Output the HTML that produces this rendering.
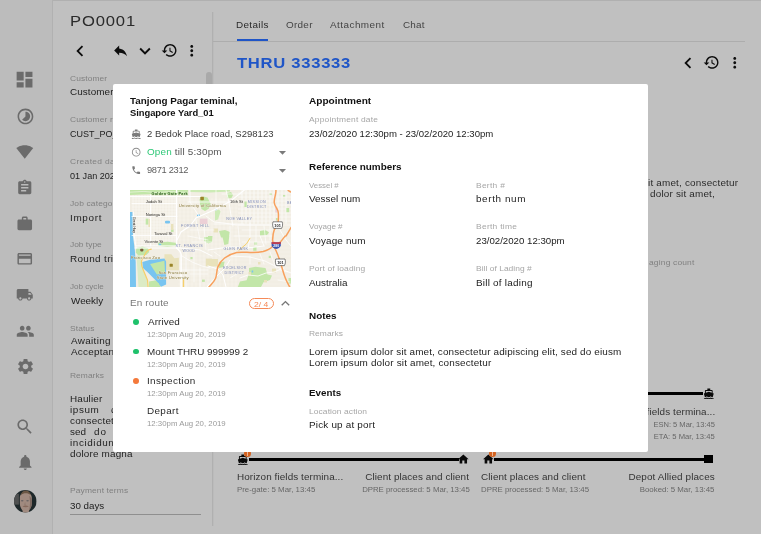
<!DOCTYPE html>
<html lang="en"><head><meta charset="utf-8"><title>PO0001 - Location details</title>
<style>
html,body{margin:0;padding:0}
body{width:761px;height:534px;overflow:hidden;background:#c0c0c0;position:relative;
 font-family:"Liberation Sans",sans-serif;-webkit-font-smoothing:antialiased}
.t{position:absolute;white-space:nowrap;line-height:12px;display:block;will-change:transform}
.ic{position:absolute;display:block;overflow:visible}
.b{position:absolute;display:block}
</style></head><body>
<div class="b" style="left:0px;top:0px;width:52px;height:534px;background:#bcbcbc;"></div>
<div class="b" style="left:52px;top:0px;width:1px;height:534px;background:#b1b1b1;"></div>
<div class="b" style="left:53px;top:0px;width:708px;height:1px;background:#b0b0b0;"></div>
<div class="b" style="left:212px;top:12px;width:1px;height:514px;background:#b0b0b0;"></div>
<div class="b" style="left:213px;top:12px;width:1px;height:514px;background:#bbbbbb;"></div>
<div class="b" style="left:213px;top:41px;width:532px;height:1px;background:#adadad;"></div>
<div class="b" style="left:237px;top:39px;width:31px;height:2px;background:#1f55c7;"></div>
<div class="b" style="left:206px;top:72px;width:6px;height:60px;background:#a9a9a9;border-radius:3px;"></div>
<div class="b" style="left:70px;top:514px;width:131px;height:1px;background:#8f8f8f;"></div>
<svg class="ic" style="left:14.45px;top:69.45px;width:21.10px;height:21.10px" viewBox="0 0 24 24"><path fill="#6b6b6b" d="M3 13h8V3H3v10zm0 8h8v-6H3v6zm10 0h8V11h-8v10zm0-18v6h8V3h-8z"/></svg>
<svg class="ic" style="left:15.55px;top:106.55px;width:18.90px;height:18.90px" viewBox="0 0 24 24"><path fill="#6b6b6b" d="M16.24 7.76C15.07 6.59 13.54 6 12 6v6l-4.24 4.24c2.34 2.34 6.14 2.34 8.49 0 2.34-2.34 2.34-6.14-.01-8.48zM12 2C6.48 2 2 6.48 2 12s4.48 10 10 10 10-4.48 10-10S17.52 2 12 2zm0 18c-4.42 0-8-3.58-8-8s3.58-8 8-8 8 3.58 8 8-3.58 8-8 8z"/></svg>
<svg class="ic" style="left:16.25px;top:143.25px;width:17.50px;height:17.50px" viewBox="0 0 24 24"><path fill="#6b6b6b" d="M12.01 21.49L23.64 7c-.45-.34-4.93-4-11.64-4C5.28 3 .81 6.66.36 7l11.63 14.49.01.01.01-.01z"/></svg>
<svg class="ic" style="left:16.25px;top:178.75px;width:17.50px;height:17.50px" viewBox="0 0 24 24"><path fill="#6b6b6b" d="M19 3h-4.18C14.4 1.84 13.3 1 12 1c-1.3 0-2.4.84-2.82 2H5c-1.1 0-2 .9-2 2v14c0 1.1.9 2 2 2h14c1.1 0 2-.9 2-2V5c0-1.1-.9-2-2-2zm-7 0c.55 0 1 .45 1 1s-.45 1-1 1-1-.45-1-1 .45-1 1-1zm2 14H7v-2h7v2zm3-4H7v-2h10v2zm0-4H7V7h10v2z"/></svg>
<svg class="ic" style="left:16.25px;top:214.75px;width:17.50px;height:17.50px" viewBox="0 0 24 24"><path fill="#6b6b6b" d="M20 6h-4V4c0-1.11-.89-2-2-2h-4c-1.11 0-2 .89-2 2v2H4c-1.11 0-1.99.89-1.99 2L2 19c0 1.11.89 2 2 2h16c1.11 0 2-.89 2-2V8c0-1.11-.89-2-2-2zm-6 0h-4V4h4v2z"/></svg>
<svg class="ic" style="left:16.25px;top:250.25px;width:17.50px;height:17.50px" viewBox="0 0 24 24"><path fill="#6b6b6b" d="M20 4H4c-1.11 0-1.99.89-1.99 2L2 18c0 1.11.89 2 2 2h16c1.11 0 2-.89 2-2V6c0-1.11-.89-2-2-2zm0 14H4v-6h16v6zm0-10H4V6h16v2z"/></svg>
<svg class="ic" style="left:16.25px;top:286.25px;width:17.50px;height:17.50px" viewBox="0 0 24 24"><path fill="#6b6b6b" d="M20 8h-3V4H3c-1.1 0-2 .9-2 2v11h2c0 1.66 1.34 3 3 3s3-1.34 3-3h6c0 1.66 1.34 3 3 3s3-1.34 3-3h2v-5l-3-4zM6 18.5c-.83 0-1.5-.67-1.5-1.5s.67-1.5 1.5-1.5 1.5.67 1.5 1.5-.67 1.5-1.5 1.5zm13.5-9l1.96 2.5H17V9.5h2.5zm-1.5 9c-.83 0-1.5-.67-1.5-1.5s.67-1.5 1.5-1.5 1.5.67 1.5 1.5-.67 1.5-1.5 1.5z"/></svg>
<svg class="ic" style="left:15.70px;top:321.70px;width:18.60px;height:18.60px" viewBox="0 0 24 24"><path fill="#6b6b6b" d="M16 11c1.66 0 2.99-1.34 2.99-3S17.66 5 16 5c-1.66 0-3 1.34-3 3s1.34 3 3 3zm-8 0c1.66 0 2.99-1.34 2.99-3S9.66 5 8 5C6.34 5 5 6.34 5 8s1.34 3 3 3zm0 2c-2.33 0-7 1.17-7 3.5V19h14v-2.500c0-2.33-4.67-3.5-7-3.5zm8 0c-.29 0-.62.02-.97.05 1.16.84 1.97 1.970 1.970 3.45V19h6v-2.500c0-2.33-4.67-3.5-7-3.5z"/></svg>
<svg class="ic" style="left:15.50px;top:356.90px;width:19.00px;height:19.00px" viewBox="0 0 24 24"><path fill="#6b6b6b" d="M19.140 12.940c.04-.3.06-.61.06-.94 0-.32-.02-.64-.07-.94l2.030-1.580c.18-.14.23-.41.12-.61l-1.920-3.320c-.12-.22-.37-.29-.59-.22l-2.390.96c-.5-.38-1.030-.7-1.620-.94l-.36-2.540c-.04-.24-.24-.41-.48-.41h-3.840c-.24 0-.43.17-.47.41l-.36 2.540c-.59.24-1.130.57-1.620.94l-2.390-.96c-.22-.08-.47 0-.59.22L2.740 8.870c-.12.21-.08.47.12.61l2.030 1.580c-.05.3-.09.63-.09.94s.02.640.07.940l-2.030 1.580c-.18.14-.23.41-.12.61l1.920 3.320c.12.22.37.29.59.22l2.390-.96c.5.38 1.030.7 1.620.94l.36 2.540c.05.24.24.41.48.41h3.840c.24 0 .44-.17.47-.41l.36-2.540c.59-.24 1.130-.56 1.620-.94l2.390.96c.22.08.47 0 .59-.22l1.920-3.320c.12-.22.07-.47-.12-.61l-2.010-1.580zM12 15.600c-1.980 0-3.600-1.620-3.600-3.600s1.620-3.600 3.600-3.600 3.600 1.620 3.600 3.600-1.620 3.600-3.600 3.600z"/></svg>
<svg class="ic" style="left:15.25px;top:416.75px;width:19.50px;height:19.50px" viewBox="0 0 24 24"><path fill="#6b6b6b" d="M15.5 14h-.79l-.28-.27C15.410 12.590 16 11.110 16 9.500 16 5.910 13.090 3 9.500 3S3 5.910 3 9.500 5.910 16 9.500 16c1.610 0 3.090-.59 4.230-1.570l.27.28v.79l5 4.990L20.490 19l-4.990-5zm-6 0C7.010 14 5 11.990 5 9.500S7.010 5 9.500 5 14 7.010 14 9.500 11.990 14 9.500 14z"/></svg>
<svg class="ic" style="left:15.70px;top:453.30px;width:18.60px;height:18.60px" viewBox="0 0 24 24"><path fill="#6b6b6b" d="M12 22c1.100 0 2-.9 2-2h-4c0 1.100.89 2 2 2zm6-6v-5c0-3.070-1.640-5.640-4.500-6.320V4c0-.83-.67-1.500-1.500-1.500s-1.500.67-1.500 1.500v.68C7.630 5.360 6 7.920 6 11v5l-2 2v1h16v-1l-2-2z"/></svg>
<svg class="ic" style="left:13.7px;top:489.7px;width:22.600px;height:22.700px" viewBox="0 0 24 24">
<defs><clipPath id="av"><circle cx="12" cy="12" r="12"/></clipPath></defs>
<g clip-path="url(#av)"><rect width="24" height="24" fill="#1e282a"/>
<rect x="0" y="4" width="5.200" height="11.500" fill="#4f5050"/>
<path d="M6.200 8c0-3.500 2.600-5.500 6.300-5.500s6.400 2 6.400 5.500v6c0 3-1.200 5.500-2.800 7.500l-.6 2.500H9.500l-.6-2.500C7.300 19.500 6.200 17 6.200 14z" fill="#a08a7f"/>
<path d="M7.300 5.500C7.800 2.200 10 .6 12.500 .6s4.800 1.600 5.200 4.900C16.200 3.800 14.500 3.400 12.500 3.400S8.800 3.800 7.300 5.500z" fill="#6b5745"/>
<path d="M16.300 6c1.700 1.500 2.600 3.500 2.600 6v2c0 3-1.200 5.500-2.800 7.500.6-3 1-6 .9-9-.1-2.300-.3-4.500-.7-6.500z" fill="#7d6a61"/>
<ellipse cx="8.700" cy="11.400" rx="1.400" ry=".8" fill="#6a6464"/>
<ellipse cx="14.400" cy="11.400" rx="1.400" ry=".8" fill="#6a6464"/>
<path d="M9 17.400c1.200-.8 2.200-1 3.400-1s2.300.3 3.400 1c-1 .5-2.200.9-3.400.9s-2.400-.4-3.400-.9z" fill="#85695c"/>
<path d="M11.800 12.500l-.9 3.200 1.600.4z" fill="#8e786d"/>
</g></svg>
<svg class="ic" style="left:68.50px;top:39.80px;width:22.00px;height:22.00px" viewBox="0 0 24 24"><path fill="#0d0d0d" d="M15.410 7.410L14 6l-6 6 6 6 1.410-1.410L10.830 12z"/></svg>
<svg class="ic" style="left:112.15px;top:41.70px;width:17.20px;height:17.20px" viewBox="0 0 24 24"><path fill="#0d0d0d" d="M10 9V5l-7 7 7 7v-4.100c5 0 8.500 1.600 11 5.100-1-5-4-10-11-11z"/></svg>
<svg class="ic" style="left:133.60px;top:39.70px;width:22.00px;height:22.00px" viewBox="0 0 24 24"><path fill="#0d0d0d" d="M16.590 8.590L12 13.170 7.410 8.590 6 10l6 6 6-6z"/></svg>
<svg class="ic" style="left:161.15px;top:42.05px;width:16.90px;height:16.90px" viewBox="0 0 24 24"><path fill="#0d0d0d" d="M13 3c-4.970 0-9 4.030-9 9H1l3.890 3.890.07.14L9 12H6c0-3.870 3.130-7 7-7s7 3.130 7 7-3.130 7-7 7c-1.930 0-3.680-.79-4.940-2.060l-1.420 1.420C8.270 19.990 10.510 21 13 21c4.970 0 9-4.030 9-9s-4.030-9-9-9zm-1 5v5l4.280 2.540.72-1.210-3.500-2.080V8H12z"/></svg>
<svg class="ic" style="left:183.35px;top:42.05px;width:17.50px;height:17.50px" viewBox="0 0 24 24"><path fill="#0d0d0d" d="M12 8c1.100 0 2-.9 2-2s-.9-2-2-2-2 .9-2 2 .9 2 2 2zm0 2c-1.100 0-2 .9-2 2s.9 2 2 2 2-.9 2-2-.9-2-2-2zm0 6c-1.100 0-2 .9-2 2s.9 2 2 2 2-.9 2-2-.9-2-2-2z"/></svg>
<svg class="ic" style="left:676.80px;top:51.80px;width:22.00px;height:22.00px" viewBox="0 0 24 24"><path fill="#0d0d0d" d="M15.410 7.410L14 6l-6 6 6 6 1.410-1.410L10.830 12z"/></svg>
<svg class="ic" style="left:703.45px;top:53.95px;width:16.90px;height:16.90px" viewBox="0 0 24 24"><path fill="#0d0d0d" d="M13 3c-4.970 0-9 4.030-9 9H1l3.890 3.890.07.14L9 12H6c0-3.870 3.130-7 7-7s7 3.130 7 7-3.130 7-7 7c-1.930 0-3.680-.79-4.940-2.060l-1.420 1.420C8.270 19.990 10.510 21 13 21c4.970 0 9-4.030 9-9s-4.030-9-9-9zm-1 5v5l4.280 2.540.72-1.210-3.500-2.080V8H12z"/></svg>
<svg class="ic" style="left:726.25px;top:54.05px;width:17.50px;height:17.50px" viewBox="0 0 24 24"><path fill="#0d0d0d" d="M12 8c1.100 0 2-.9 2-2s-.9-2-2-2-2 .9-2 2 .9 2 2 2zm0 2c-1.100 0-2 .9-2 2s.9 2 2 2 2-.9 2-2-.9-2-2-2zm0 6c-1.100 0-2 .9-2 2s.9 2 2 2 2-.9 2-2-.9-2-2-2z"/></svg>
<div class="b" style="left:648px;top:392.3px;width:55px;height:3px;background:#000;"></div>
<svg class="ic" style="left:703.00px;top:387.90px;width:11.60px;height:11.60px" viewBox="0 0 24 24"><path fill="#0a0a0a" d="M20 21c-1.390 0-2.780-.47-4-1.320-2.440 1.710-5.560 1.710-8 0C6.780 20.530 5.390 21 4 21H2v2h2c1.380 0 2.740-.35 4-.99 2.520 1.290 5.480 1.290 8 0 1.260.65 2.620.99 4 .99h2v-2h-2zM3.950 19H4c1.600 0 3.020-.88 4-2 .98 1.120 2.400 2 4 2s3.020-.88 4-2c.98 1.120 2.400 2 4 2h.05l1.890-6.680c.08-.26.06-.54-.06-.78s-.34-.42-.6-.5L20 10.620V6c0-1.100-.9-2-2-2h-3V1H9v3H6c-1.100 0-2 .9-2 2v4.620l-1.290.42c-.26.08-.48.26-.6.5s-.15.52-.06.78L3.950 19zM6 6h12v3.970L12 8 6 9.970V6z"/></svg>
<div class="b" style="left:249px;top:457.7px;width:209.5px;height:3px;background:#000;"></div>
<div class="b" style="left:494px;top:457.7px;width:211px;height:3px;background:#000;"></div>
<svg class="ic" style="left:237.20px;top:453.90px;width:11.60px;height:11.60px" viewBox="0 0 24 24"><path fill="#0a0a0a" d="M20 21c-1.390 0-2.780-.47-4-1.320-2.440 1.710-5.560 1.710-8 0C6.780 20.530 5.390 21 4 21H2v2h2c1.380 0 2.740-.35 4-.99 2.520 1.290 5.480 1.290 8 0 1.260.65 2.620.99 4 .99h2v-2h-2zM3.950 19H4c1.600 0 3.020-.88 4-2 .98 1.120 2.400 2 4 2s3.020-.88 4-2c.98 1.120 2.400 2 4 2h.05l1.890-6.680c.08-.26.06-.54-.06-.78s-.34-.42-.6-.5L20 10.620V6c0-1.100-.9-2-2-2h-3V1H9v3H6c-1.100 0-2 .9-2 2v4.620l-1.290.42c-.26.08-.48.26-.6.5s-.15.52-.06.78L3.950 19zM6 6h12v3.970L12 8 6 9.970V6z"/></svg>
<div class="b" style="left:243.900px;top:450.300px;width:7.100px;height:7.100px;border-radius:50%;background:#d4621f"></div>
<div class="b" style="left:247.1px;top:452.3px;width:0.8px;height:2.4px;background:#e9b79a;"></div>
<div class="b" style="left:247.1px;top:455.2px;width:0.8px;height:0.8px;background:#e9b79a;"></div>
<svg class="ic" style="left:457.45px;top:453.05px;width:12.70px;height:12.70px" viewBox="0 0 24 24"><path fill="#0a0a0a" d="M10 20v-6h4v6h5v-8h3L12 3 2 12h3v8z"/></svg>
<svg class="ic" style="left:481.75px;top:453.05px;width:12.70px;height:12.70px" viewBox="0 0 24 24"><path fill="#0a0a0a" d="M10 20v-6h4v6h5v-8h3L12 3 2 12h3v8z"/></svg>
<div class="b" style="left:488.600px;top:450.300px;width:7.100px;height:7.100px;border-radius:50%;background:#d4621f"></div>
<div class="b" style="left:491.8px;top:452.3px;width:0.8px;height:2.4px;background:#e9b79a;"></div>
<div class="b" style="left:491.8px;top:455.2px;width:0.8px;height:0.8px;background:#e9b79a;"></div>
<div class="b" style="left:704.2px;top:455.2px;width:8.5px;height:8.3px;background:#000;"></div>
<div class="b" style="z-index:1;left:113px;top:84px;width:535px;height:368px;background:#fff;border-radius:2px"></div>
<svg class="ic" style="z-index:2;left:130.70px;top:128.50px;width:10.40px;height:10.40px" viewBox="0 0 24 24"><path fill="#7a7a7a" d="M20 21c-1.390 0-2.780-.47-4-1.320-2.440 1.710-5.560 1.710-8 0C6.780 20.530 5.390 21 4 21H2v2h2c1.380 0 2.740-.35 4-.99 2.520 1.290 5.480 1.290 8 0 1.260.65 2.620.99 4 .99h2v-2h-2zM3.950 19H4c1.600 0 3.020-.88 4-2 .98 1.120 2.400 2 4 2s3.020-.88 4-2c.98 1.120 2.400 2 4 2h.05l1.890-6.680c.08-.26.06-.54-.06-.78s-.34-.42-.6-.5L20 10.620V6c0-1.100-.9-2-2-2h-3V1H9v3H6c-1.100 0-2 .9-2 2v4.620l-1.290.42c-.26.08-.48.26-.6.5s-.15.52-.06.78L3.950 19zM6 6h12v3.970L12 8 6 9.970V6z"/></svg>
<svg class="ic" style="z-index:2;left:130.90px;top:146.60px;width:10.40px;height:10.40px" viewBox="0 0 24 24"><path fill="#8c8c8c" d="M11.990 2C6.470 2 2 6.480 2 12s4.470 10 9.990 10C17.520 22 22 17.520 22 12S17.520 2 11.990 2zM12 20c-4.420 0-8-3.580-8-8s3.580-8 8-8 8 3.580 8 8-3.580 8-8 8zm.5-13H11v6l5.250 3.150.75-1.230-4.500-2.670z"/></svg>
<svg class="ic" style="z-index:2;left:130.90px;top:164.70px;width:10.40px;height:10.40px" viewBox="0 0 24 24"><path fill="#7a7a7a" d="M6.620 10.790c1.440 2.830 3.760 5.140 6.590 6.590l2.200-2.200c.27-.27.67-.36 1.020-.24 1.120.37 2.330.57 3.570.57.55 0 1 .45 1 1V20c0 .55-.45 1-1 1-9.390 0-17-7.610-17-17 0-.55.45-1 1-1h3.500c.55 0 1 .45 1 1 0 1.250.2 2.450.57 3.570.11.35.03.74-.25 1.020l-2.200 2.200z"/></svg>
<svg class="ic" style="z-index:2;left:273.60px;top:144.30px;width:17.00px;height:17.00px" viewBox="0 0 24 24"><path fill="#7a7a7a" d="M7 10l5 5 5-5z"/></svg>
<svg class="ic" style="z-index:2;left:273.60px;top:162.30px;width:17.00px;height:17.00px" viewBox="0 0 24 24"><path fill="#7a7a7a" d="M7 10l5 5 5-5z"/></svg>
<svg class="ic" style="z-index:2;left:276.55px;top:295.25px;width:16.90px;height:16.90px" viewBox="0 0 24 24"><path fill="#777" d="M12 8l-6 6 1.410 1.410L12 10.830l4.590 4.580L18 14z"/></svg>
<div class="b" style="z-index:2;left:249.400px;top:298.300px;width:22.400px;height:8.800px;border:1px solid #f58a58;border-radius:6px"></div>
<div class="b" style="z-index:2;left:132.90px;top:318.80px;width:5.800px;height:5.800px;border-radius:50%;background:#1fc16b"></div>
<div class="b" style="z-index:2;left:132.90px;top:348.70px;width:5.800px;height:5.800px;border-radius:50%;background:#1fc16b"></div>
<div class="b" style="z-index:2;left:132.90px;top:378.40px;width:5.800px;height:5.800px;border-radius:50%;background:#f4793b"></div>
<svg class="ic" style="z-index:2;left:130px;top:190px;width:161px;height:97px;overflow:hidden;will-change:transform" viewBox="0 0 161 97">
<rect width="161" height="97" fill="#f2eee4"/>
<path d="M3 5V56" stroke="#fbf9f4" stroke-width=".6"/><path d="M6 5V56" stroke="#fbf9f4" stroke-width=".6"/><path d="M9 5V56" stroke="#fbf9f4" stroke-width=".6"/><path d="M12 5V56" stroke="#fbf9f4" stroke-width=".6"/><path d="M15 5V56" stroke="#fbf9f4" stroke-width=".6"/><path d="M18 5V56" stroke="#fbf9f4" stroke-width=".6"/><path d="M21 5V56" stroke="#fbf9f4" stroke-width=".6"/><path d="M24 5V56" stroke="#fbf9f4" stroke-width=".6"/><path d="M27 5V56" stroke="#fbf9f4" stroke-width=".6"/><path d="M30 5V56" stroke="#fbf9f4" stroke-width=".6"/><path d="M33 5V56" stroke="#fbf9f4" stroke-width=".6"/><path d="M36 5V56" stroke="#fbf9f4" stroke-width=".6"/><path d="M39 5V56" stroke="#fbf9f4" stroke-width=".6"/><path d="M42 5V56" stroke="#fbf9f4" stroke-width=".6"/><path d="M45 5V56" stroke="#fbf9f4" stroke-width=".6"/><path d="M2 8H47" stroke="#fbf9f4" stroke-width=".5"/><path d="M2 11H47" stroke="#fbf9f4" stroke-width=".5"/><path d="M2 14H47" stroke="#fbf9f4" stroke-width=".5"/><path d="M2 17H47" stroke="#fbf9f4" stroke-width=".5"/><path d="M2 20H47" stroke="#fbf9f4" stroke-width=".5"/><path d="M2 23H47" stroke="#fbf9f4" stroke-width=".5"/><path d="M2 26H47" stroke="#fbf9f4" stroke-width=".5"/><path d="M2 29H47" stroke="#fbf9f4" stroke-width=".5"/><path d="M2 32H47" stroke="#fbf9f4" stroke-width=".5"/><path d="M2 35H47" stroke="#fbf9f4" stroke-width=".5"/><path d="M2 38H47" stroke="#fbf9f4" stroke-width=".5"/><path d="M2 41H47" stroke="#fbf9f4" stroke-width=".5"/><path d="M2 44H47" stroke="#fbf9f4" stroke-width=".5"/><path d="M2 47H47" stroke="#fbf9f4" stroke-width=".5"/><path d="M2 50H47" stroke="#fbf9f4" stroke-width=".5"/><path d="M2 53H47" stroke="#fbf9f4" stroke-width=".5"/><path d="M112 0V34" stroke="#fdfcfa" stroke-width=".8"/><path d="M116 0V34" stroke="#fdfcfa" stroke-width=".8"/><path d="M120 0V34" stroke="#fdfcfa" stroke-width=".8"/><path d="M124 0V34" stroke="#fdfcfa" stroke-width=".8"/><path d="M128 0V34" stroke="#fdfcfa" stroke-width=".8"/><path d="M132 0V34" stroke="#fdfcfa" stroke-width=".8"/><path d="M136 0V34" stroke="#fdfcfa" stroke-width=".8"/><path d="M140 0V34" stroke="#fdfcfa" stroke-width=".8"/><path d="M144 0V34" stroke="#fdfcfa" stroke-width=".8"/><path d="M148 0V34" stroke="#fdfcfa" stroke-width=".8"/><path d="M152 0V34" stroke="#fdfcfa" stroke-width=".8"/><path d="M156 0V34" stroke="#fdfcfa" stroke-width=".8"/><path d="M108 3H161" stroke="#fdfcfa" stroke-width=".6"/><path d="M108 7H161" stroke="#fdfcfa" stroke-width=".6"/><path d="M108 11H161" stroke="#fdfcfa" stroke-width=".6"/><path d="M108 15H161" stroke="#fdfcfa" stroke-width=".6"/><path d="M108 19H161" stroke="#fdfcfa" stroke-width=".6"/><path d="M108 23H161" stroke="#fdfcfa" stroke-width=".6"/><path d="M108 27H161" stroke="#fdfcfa" stroke-width=".6"/><path d="M108 31H161" stroke="#fdfcfa" stroke-width=".6"/><path d="M108 35H161" stroke="#fdfcfa" stroke-width=".6"/><path d="M50 8V97" stroke="#f8f5ee" stroke-width=".5"/><path d="M54 8V97" stroke="#f8f5ee" stroke-width=".5"/><path d="M58 8V97" stroke="#f8f5ee" stroke-width=".5"/><path d="M62 8V97" stroke="#f8f5ee" stroke-width=".5"/><path d="M66 8V97" stroke="#f8f5ee" stroke-width=".5"/><path d="M70 8V97" stroke="#f8f5ee" stroke-width=".5"/><path d="M74 8V97" stroke="#f8f5ee" stroke-width=".5"/><path d="M78 8V97" stroke="#f8f5ee" stroke-width=".5"/><path d="M82 8V97" stroke="#f8f5ee" stroke-width=".5"/><path d="M86 8V97" stroke="#f8f5ee" stroke-width=".5"/><path d="M90 8V97" stroke="#f8f5ee" stroke-width=".5"/><path d="M94 8V97" stroke="#f8f5ee" stroke-width=".5"/><path d="M98 8V97" stroke="#f8f5ee" stroke-width=".5"/><path d="M102 8V97" stroke="#f8f5ee" stroke-width=".5"/><path d="M106 8V97" stroke="#f8f5ee" stroke-width=".5"/><path d="M48 10H161" stroke="#f8f5ee" stroke-width=".4"/><path d="M48 14H161" stroke="#f8f5ee" stroke-width=".4"/><path d="M48 18H161" stroke="#f8f5ee" stroke-width=".4"/><path d="M48 22H161" stroke="#f8f5ee" stroke-width=".4"/><path d="M48 26H161" stroke="#f8f5ee" stroke-width=".4"/><path d="M48 30H161" stroke="#f8f5ee" stroke-width=".4"/><path d="M48 34H161" stroke="#f8f5ee" stroke-width=".4"/><path d="M48 38H161" stroke="#f8f5ee" stroke-width=".4"/><path d="M48 42H161" stroke="#f8f5ee" stroke-width=".4"/><path d="M48 46H161" stroke="#f8f5ee" stroke-width=".4"/><path d="M48 50H161" stroke="#f8f5ee" stroke-width=".4"/><path d="M48 54H161" stroke="#f8f5ee" stroke-width=".4"/><path d="M48 58H161" stroke="#f8f5ee" stroke-width=".4"/><path d="M48 62H161" stroke="#f8f5ee" stroke-width=".4"/><path d="M48 66H161" stroke="#f8f5ee" stroke-width=".4"/><path d="M48 70H161" stroke="#f8f5ee" stroke-width=".4"/><path d="M48 74H161" stroke="#f8f5ee" stroke-width=".4"/><path d="M48 78H161" stroke="#f8f5ee" stroke-width=".4"/><path d="M48 82H161" stroke="#f8f5ee" stroke-width=".4"/><path d="M48 86H161" stroke="#f8f5ee" stroke-width=".4"/><path d="M48 90H161" stroke="#f8f5ee" stroke-width=".4"/><path d="M48 94H161" stroke="#f8f5ee" stroke-width=".4"/>
<g fill="#c2e6a8">
<path d="M0 0H58V3.500L47 4.200 30 4 12 4.600 0 5z"/>
<path d="M60 0h40v1.500l-20 1-20-.5z" fill="#cdebb6"/>
<path d="M0 2.200l14-.8 12 1.200 14-1 18 .8" stroke="#eef6e2" stroke-width=".7" fill="none"/>
<rect x="15.700" y="28.600" width="2.800" height="6"/>
<rect x="41" y="39.500" width="2.600" height="2.400"/>
<path d="M69.500 9l4-2.500 4 1 2.500 5-1 6-4 2.500-3.500-2-1.500-5z"/>
<path d="M97 3l4-1 2 3-1.500 3-4 .5z"/>
<rect x="78" y="13" width="2.500" height="4"/>
<rect x="114.400" y="11.500" width="2.300" height="5.500"/>
<path d="M85 21l4-1.500 1.500 2-2.500 8-3 1z" fill="#cdebb6"/>
<path d="M89 41l6-1 5 2-1 5-8 .5z"/>
<path d="M130 41l5-1.500 4 3-2 2.500-7 .5z"/>
<rect x="156.400" y="18" width="2.800" height="4.200"/>
<rect x="139.500" y="3.500" width="2.500" height="1.200"/>
<rect x="153" y="5" width="2.200" height="1.600"/>
<rect x="146" y="28" width="1.600" height="2.500"/>
<path d="M27.800 52.500l10-.8 8 1 .5 3-9 1-9-1z"/>
<path d="M6.300 58l6-1.500 5.500 1.500 1.500 4-3 3-8 .5-2.500-3z"/>
<path d="M74 47h8v5l-5 1-3-2z"/>
<path d="M78 46h4.500l-.5 6-4 1.500z"/>
<path d="M92.300 46h7l-1 8-4 1z"/>
<path d="M89 72.500l5.600-1-1 5.500-4.500 1z"/>
<rect x="72" y="89.600" width="2.800" height="2.300"/>
<rect x="60.400" y="67" width="2.200" height="2.200"/>
<rect x="124.300" y="52" width="2.800" height="2.800"/>
<rect x="123.200" y="57" width="3.300" height="3.800"/>
<rect x="138.700" y="65.800" width="2.200" height="2.200"/>
<rect x="158.500" y="88" width="2.500" height="5.500"/>
<path d="M119 78l6.500-1.200 10 1.200 2 6.500 4.500 1-2 4.500-6.500 2.200-2.500 4.800H107.800l2.200-5.500 6.600-1.200 2.400-6.600z"/>
<path d="M19 97l1-5 6-1.500 4 3 .5 3.500z"/>
</g>
<path d="M6.500 66l3-1 2 6 1.500 8 4 11 1 7H8.500l-1-16z" fill="#dcebc5"/>
<g fill="#e9e2bb">
<rect x="18.400" y="29" width="2" height="8"/>
<rect x="41" y="34" width="2.400" height="5.800"/>
<path d="M34.400 64.200h7l3 4 4.500-.5v12.500H36.500l-2-5z"/>
<rect x="75.800" y="68.600" width="6.400" height="7.800"/>
<rect x="78" y="69" width="10" height="7.400"/>
<rect x="83.500" y="38.500" width="4.500" height="4"/>
<rect x="142" y="78.600" width="4" height="3.800"/>
<rect x="128" y="72" width="2.500" height="2.500"/>
<rect x="118.500" y="82" width="2.500" height="3.500"/>
<rect x="134" y="90" width="3" height="2.500"/>
</g>
<rect x="69.700" y="28.600" width="7.800" height="5.400" fill="#ecd0d6"/>
<rect x="145.300" y="17.500" width="2.300" height="5" fill="#ecd0d6"/>
<g fill="#78c4f0">
<path d="M0 22h2.400l.6 24 1.800 14 .9 12 .3 25H0z"/>
<rect x="35" y="30.800" width="5" height="2.700" rx="1"/>
<path d="M12.300 72l7.800-2.300 14.300-1.100 1.700 2.800v23.200l-5 2.200-5.500-6.600-7.700-7.800-5-4.400z"/>
<rect x="28.800" y="53.700" width="2.400" height="1.600"/>
<rect x="67" y="24.500" width="3" height="1.600"/>
<rect x="85" y="18.800" width="1.600" height="1.400"/>
<rect x="121.700" y="80.500" width="1.500" height="2"/>
</g>
<path d="M20.100 74.100l14.300-3.300 .6 11.600-3.900 1.700-4.200.5-3.700-5.500z" fill="#c2e6a8"/>
<path d="M19 91.500l6-1 4 3 .5 3.500H19z" fill="#c2e6a8"/>
<g fill="none" stroke="#ffffff" stroke-linecap="round">
<path d="M0 6.500H70" stroke-width="1.100"/>
<path d="M20.600 5V56" stroke-width="1"/>
<path d="M46.600 0V58" stroke-width="1.300"/>
<path d="M2 13.500H47M2 26.500H47M2 45.500H47M6 55.800H50" stroke-width=".8"/>
<path d="M46.600 58c2 2 4 3 4.500 6V97" stroke-width="1.500"/>
<path d="M3.500 22l.8 24 1.800 12" stroke-width=".9"/>
<path d="M5 58h45l20 2 12 6" stroke-width="1"/>
<path d="M114.400 0L100 11.500 84 20 66 28l-6 8-9 6-4 8" stroke-width="1.100"/>
<path d="M60 0V12l5 8 4 6M58 12h50M76 26l8 6 10 1 12 2h40" stroke-width=".8"/>
<path d="M96 0l3 12 2 14 2 10M120 33v14l-2 12" stroke-width=".8"/>
<path d="M78 60l14-2 10-1 20 .5 12-1.500" stroke-width=".9"/>
<path d="M78 76l10 3 5 6 3 12M100 70l-5 8-10 10-8 9" stroke-width="1"/>
<path d="M100 66l20 1 15 4 12 6 14 6" stroke-width=".8"/>
<path d="M110 88l8-3 10 1 8-3 8-1 10-4" stroke-width=".8"/>
<path d="M52 66l10 6 10 4 8 2M52 80h26M56 60v37" stroke-width=".7"/>
<path d="M150 40l6 10 5 6M130 46l4 10" stroke-width=".8"/>
<path d="M86 0v20M92 4h20M84 34h30M100 36v22M108 36l2 20M126 36v20M134 36l2 18M140 36v14M112 40h34M104 46h40M112 52h28" stroke-width=".6"/>
<path d="M60 40h24M58 46l20 4M62 52h20M66 30l4 20M74 36l2 24M84 62l6 4M60 84h18M64 62v30M70 78v19M100 88l10-6M120 66v8M130 64l4 10M140 62l6 16M150 80l8 2M148 90l12 2" stroke-width=".6"/>
</g>
<g fill="none" stroke="#f6cf6a" stroke-linecap="round">
<path d="M21.200 59.200c-2 .2-3.500 1-5 3l-4 7c-1.500 3-1 6 .8 10l4.500 11 .6 6.800" stroke-width="1.200"/>
<path d="M120 48.200l-3.400 5.500-7.700 6.600" stroke-width="1"/>
<path d="M53.500 89v8" stroke-width="1.300"/>
</g>
<g fill="none" stroke="#f8a05c" stroke-width="1.500" stroke-linecap="round" stroke-linejoin="round">
<path d="M145.900 0c.5 4-2 8-1.700 12.500.3 3.500 3.400 6 3.900 9 .6 3.500.4 7 0 11-.4 3-2.800 5-3.900 7.600-1.300 3.400-1.500 7-1.600 10 .1 2.500 1.300 4 1.600 5.500"/>
<path d="M79 97c2.500-3 5.500-5.500 6.700-9 1.300-3.800.8-7.600 2.200-11.100 1.300-3.400 3.700-6.600 6.700-8.900 3.400-2.600 7.800-4.400 12.100-5.400 5-1.100 10.400 0 15.500 0 3.700 0 7.500-.2 11-1.100 3.200-.9 6.600-2 8.800-4.500 1.300-1.400 2.200-3 2.200-4.400"/>
<path d="M144.200 57c2.800 5.200 4.800 10.800 6.600 16.600 1.500 4.800 2.600 9.800 4.500 14.400 1.200 3.100 2.800 6 4.400 9"/>
<path d="M155.300 46c-1.600 1.800-3 3.700-4.500 5.500-1.900 2.100-4.300 3.800-6.600 5.500"/>
<path d="M161 37.500c-1.500 2.800-3.200 5.500-4.800 8.300"/>
<path d="M158 0c.8 1 1.800 1.700 3 2"/>
</g>
<g font-family="Liberation Sans, sans-serif" font-size="4.100" fill="#3c4a2c" stroke="#f2eee4" stroke-width=".4" paint-order="stroke">
<text x="21.500" y="4.900" fill="#2f5a22" font-weight="700" font-size="3.800" textLength="36" stroke="#c2e6a8">Golden Gate Park</text>
<text x="15.700" y="13.200" fill="#2e2e2e">Judah St</text>
<text x="15.700" y="26.400" fill="#2e2e2e">Noriega St</text>
<text x="24.200" y="45.300" fill="#2e2e2e">Taraval St</text>
<text x="14.600" y="52.500" fill="#2e2e2e">Vicente St</text>
<text x="100" y="13.300" fill="#2e2e2e">16th St</text>
<text transform="translate(3.300 27) rotate(90)" fill="#2e2e2e" font-size="3.400">Great Hwy</text>
<text x="48.800" y="17.300" fill="#8a7a3c" font-size="4.200" textLength="47">University of California</text>
<text x="-3" y="68.700" fill="#8a7a3c" font-size="4.200" textLength="33">n Francisco Zoo</text>
<text x="28.400" y="83.500" fill="#8a7a3c" font-size="4.200" textLength="28.600">San Francisco</text>
<text x="26.700" y="89" fill="#8a7a3c" font-size="4.200" textLength="32">State University</text>
</g>
<g font-family="Liberation Sans, sans-serif" font-size="3.700" fill="#7f8bb9" letter-spacing=".3">
<text x="51" y="36.800" textLength="28.700">FOREST HILL</text>
<text x="96.200" y="29.600" textLength="26">NOE VALLEY</text>
<text x="117.700" y="12.500" textLength="18.300">MISSION</text>
<text x="117" y="17.500" textLength="19.500">DISTRICT</text>
<text x="45.500" y="56.800" textLength="27.500">ST. FRANCIS</text>
<text x="52.600" y="61.800" textLength="12.700">WOOD</text>
<text x="93.500" y="59.600" textLength="24.800">GLEN PARK</text>
<text x="92.900" y="79" textLength="23.700">EXCELSIOR</text>
<text x="94.600" y="84" textLength="19.800">DISTRICT</text>
<text x="157" y="13.500">BE</text>
</g>
<g>
<rect x="70.300" y="6.800" width="3.600" height="3.400" rx=".8" fill="#9a8528"/>
<rect x="39.600" y="73.800" width="3.200" height="3" rx=".6" fill="#9a8528"/>
<rect x="10.200" y="58.800" width="3.200" height="2.600" rx=".8" fill="#7a5a3a"/>
<path d="M143 31.800h9.200c.6 2.200.6 4.400-.6 6.600h-8c-1.200-2.200-1.200-4.400-.6-6.600z" fill="#fff" stroke="#333" stroke-width=".6"/>
<text x="147.600" y="36.600" font-family="Liberation Sans, sans-serif" font-size="3.900" font-weight="700" text-anchor="middle" fill="#222">101</text>
<path d="M145.800 69h9.200c.6 2.200.6 4.400-.6 6.600h-8c-1.200-2.200-1.200-4.400-.6-6.600z" fill="#fff" stroke="#333" stroke-width=".6"/>
<text x="150.400" y="73.800" font-family="Liberation Sans, sans-serif" font-size="3.900" font-weight="700" text-anchor="middle" fill="#222">101</text>
<path d="M141.600 52.200h9.200v3c0 2-2 3-4.600 3.800-2.600-.8-4.600-1.800-4.600-3.800z" fill="#3b55b0"/>
<path d="M141.600 52.200h9.200v1.700h-9.200z" fill="#cc3b46"/>
<text x="146.200" y="57.400" font-family="Liberation Sans, sans-serif" font-size="3.400" font-weight="700" text-anchor="middle" fill="#fff">280</text>
</g>
</svg>
<span class="t" id="t0" style="top:15.00px;font-size:14.6px;color:#2a2a2a;letter-spacing:0.724px;left:69.57px;transform:scaleX(1.1400);transform-origin:0 50%;z-index:0;">PO0001</span>
<span class="t" id="t1" style="top:19.00px;font-size:8.7px;color:#2a2a2a;letter-spacing:0.311px;left:236.21px;transform:scaleX(1.1400);transform-origin:0 50%;z-index:0;">Details</span>
<span class="t" id="t2" style="top:19.00px;font-size:8.7px;color:#444;letter-spacing:0.246px;left:285.65px;transform:scaleX(1.1400);transform-origin:0 50%;z-index:0;">Order</span>
<span class="t" id="t3" style="top:19.00px;font-size:8.7px;color:#444;letter-spacing:0.406px;left:330.20px;transform:scaleX(1.1400);transform-origin:0 50%;z-index:0;">Attachment</span>
<span class="t" id="t4" style="top:19.00px;font-size:8.7px;color:#444;letter-spacing:0.139px;left:403.10px;transform:scaleX(1.1400);transform-origin:0 50%;z-index:0;">Chat</span>
<span class="t" id="t5" style="top:57.00px;font-size:14.6px;color:#1f55c7;font-weight:700;letter-spacing:0.612px;left:236.83px;transform:scaleX(1.1400);transform-origin:0 50%;z-index:0;">THRU 333333</span>
<span class="t" id="t6" style="top:72.50px;font-size:7.4px;color:#808080;letter-spacing:0.071px;left:70.08px;transform:scaleX(1.1400);transform-origin:0 50%;z-index:0;">Customer</span>
<span class="t" id="t7" style="top:86.00px;font-size:8.7px;color:#1d1d1d;letter-spacing:0.064px;left:70.00px;transform:scaleX(1.1400);transform-origin:0 50%;z-index:0;">Customer name</span>
<span class="t" id="t8" style="top:113.50px;font-size:7.4px;color:#808080;letter-spacing:0.107px;left:70.08px;transform:scaleX(1.1400);transform-origin:0 50%;z-index:0;">Customer ref</span>
<span class="t" id="t9" style="top:128.00px;font-size:8.7px;color:#1d1d1d;left:70.05px;transform:scaleX(1.0342);transform-origin:0 50%;z-index:0;">CUST_PO_001</span>
<span class="t" id="t10" style="top:155.50px;font-size:7.4px;color:#808080;letter-spacing:0.303px;left:70.08px;transform:scaleX(1.1400);transform-origin:0 50%;z-index:0;">Created date</span>
<span class="t" id="t11" style="top:170.00px;font-size:8.7px;color:#1d1d1d;left:70.18px;transform:scaleX(1.0445);transform-origin:0 50%;z-index:0;">01 Jan 2020</span>
<span class="t" id="t12" style="top:197.50px;font-size:7.4px;color:#808080;letter-spacing:0.125px;left:70.37px;transform:scaleX(1.1400);transform-origin:0 50%;z-index:0;">Job category</span>
<span class="t" id="t13" style="top:212.00px;font-size:8.7px;color:#1d1d1d;letter-spacing:0.599px;left:69.61px;transform:scaleX(1.1400);transform-origin:0 50%;z-index:0;">Import</span>
<span class="t" id="t14" style="top:238.50px;font-size:7.4px;color:#808080;left:70.37px;transform:scaleX(1.1358);transform-origin:0 50%;z-index:0;">Job type</span>
<span class="t" id="t15" style="top:253.00px;font-size:8.7px;color:#1d1d1d;letter-spacing:0.306px;left:69.71px;transform:scaleX(1.1400);transform-origin:0 50%;z-index:0;">Round trip</span>
<span class="t" id="t16" style="top:280.50px;font-size:7.4px;color:#808080;left:70.38px;transform:scaleX(1.0943);transform-origin:0 50%;z-index:0;">Job cycle</span>
<span class="t" id="t17" style="top:295.00px;font-size:8.7px;color:#1d1d1d;left:70.50px;transform:scaleX(1.1352);transform-origin:0 50%;z-index:0;">Weekly</span>
<span class="t" id="t18" style="top:322.50px;font-size:7.4px;color:#808080;letter-spacing:0.081px;left:70.12px;transform:scaleX(1.1400);transform-origin:0 50%;z-index:0;">Status</span>
<span class="t" id="t19" style="top:335.00px;font-size:8.7px;color:#1d1d1d;letter-spacing:0.288px;left:70.50px;transform:scaleX(1.1400);transform-origin:0 50%;z-index:0;">Awaiting</span>
<span class="t" id="t20" style="top:346.00px;font-size:8.7px;color:#1d1d1d;letter-spacing:0.207px;left:70.50px;transform:scaleX(1.1400);transform-origin:0 50%;z-index:0;">Acceptance</span>
<span class="t" id="t21" style="top:369.50px;font-size:7.4px;color:#808080;letter-spacing:0.032px;left:69.83px;transform:scaleX(1.1400);transform-origin:0 50%;z-index:0;">Remarks</span>
<span class="t" id="t22" style="top:393.00px;font-size:8.7px;color:#1d1d1d;letter-spacing:0.117px;left:69.71px;transform:scaleX(1.1400);transform-origin:0 50%;z-index:0;">Haulier</span>
<span class="t" id="t23" style="top:404.00px;font-size:8.7px;color:#1d1d1d;letter-spacing:0.529px;left:69.86px;transform:scaleX(1.1400);transform-origin:0 50%;z-index:0;">ipsum</span>
<span class="t" id="t24" style="top:404.00px;font-size:8.7px;color:#1d1d1d;letter-spacing:0.041px;left:110.90px;transform:scaleX(1.1400);transform-origin:0 50%;z-index:0;">dolor</span>
<span class="t" id="t25" style="top:415.00px;font-size:8.7px;color:#1d1d1d;letter-spacing:0.160px;left:70.10px;transform:scaleX(1.1400);transform-origin:0 50%;z-index:0;">consectetur</span>
<span class="t" id="t26" style="top:426.00px;font-size:8.7px;color:#1d1d1d;letter-spacing:0.028px;left:70.25px;transform:scaleX(1.1400);transform-origin:0 50%;z-index:0;">sed</span>
<span class="t" id="t27" style="top:426.00px;font-size:8.7px;color:#1d1d1d;letter-spacing:0.941px;left:93.90px;transform:scaleX(1.1400);transform-origin:0 50%;z-index:0;">do</span>
<span class="t" id="t28" style="top:437.00px;font-size:8.7px;color:#1d1d1d;letter-spacing:0.524px;left:69.86px;transform:scaleX(1.1400);transform-origin:0 50%;z-index:0;">incididunt</span>
<span class="t" id="t29" style="top:448.00px;font-size:8.7px;color:#1d1d1d;letter-spacing:0.160px;left:70.10px;transform:scaleX(1.1400);transform-origin:0 50%;z-index:0;">dolore magna</span>
<span class="t" id="t30" style="top:484.50px;font-size:7.4px;color:#808080;letter-spacing:0.106px;left:69.83px;transform:scaleX(1.1400);transform-origin:0 50%;z-index:0;">Payment terms</span>
<span class="t" id="t31" style="top:500.00px;font-size:8.7px;color:#1d1d1d;left:69.96px;transform:scaleX(1.1252);transform-origin:0 50%;z-index:0;">30 days</span>
<span class="t" id="t32" style="top:177.00px;font-size:8.7px;color:#2a2a2a;letter-spacing:0.168px;left:648.36px;transform:scaleX(1.1400);transform-origin:0 50%;z-index:0;">it amet, consectetur</span>
<span class="t" id="t33" style="top:188.00px;font-size:8.7px;color:#2a2a2a;letter-spacing:0.162px;left:650.20px;transform:scaleX(1.1400);transform-origin:0 50%;z-index:0;">dolor sit amet,</span>
<span class="t" id="t34" style="top:256.50px;font-size:7.4px;color:#808080;letter-spacing:0.153px;left:648.66px;transform:scaleX(1.1400);transform-origin:0 50%;z-index:0;">aging count</span>
<span class="t" id="t35" style="top:406.00px;font-size:8.7px;color:#333;letter-spacing:0.080px;right:45.54px;transform:scaleX(1.1400);transform-origin:100% 50%;z-index:0;">Horizon fields termina...</span>
<span class="t" id="t36" style="top:419.00px;font-size:7.1px;color:#666;right:46.19px;transform:scaleX(1.0621);transform-origin:100% 50%;z-index:0;">ESN: 5 Mar, 13:45</span>
<span class="t" id="t37" style="top:431.00px;font-size:7.1px;color:#666;right:46.19px;transform:scaleX(1.0746);transform-origin:100% 50%;z-index:0;">ETA: 5 Mar, 13:45</span>
<span class="t" id="t38" style="top:471.00px;font-size:8.7px;color:#333;letter-spacing:0.080px;left:236.61px;transform:scaleX(1.1400);transform-origin:0 50%;z-index:0;">Horizon fields termina...</span>
<span class="t" id="t39" style="top:484.00px;font-size:7.1px;color:#666;left:236.77px;transform:scaleX(1.1091);transform-origin:0 50%;z-index:0;">Pre-gate: 5 Mar, 13:45</span>
<span class="t" id="t40" style="top:471.00px;font-size:8.7px;color:#333;letter-spacing:0.070px;right:291.69px;transform:scaleX(1.1400);transform-origin:100% 50%;z-index:0;">Client places and client</span>
<span class="t" id="t41" style="top:484.00px;font-size:7.1px;color:#666;right:291.18px;transform:scaleX(1.1009);transform-origin:100% 50%;z-index:0;">DPRE processed: 5 Mar, 13:45</span>
<span class="t" id="t42" style="top:471.00px;font-size:8.7px;color:#333;letter-spacing:0.097px;left:481.20px;transform:scaleX(1.1400);transform-origin:0 50%;z-index:0;">Client places and client</span>
<span class="t" id="t43" style="top:484.00px;font-size:7.1px;color:#666;left:481.07px;transform:scaleX(1.1050);transform-origin:0 50%;z-index:0;">DPRE processed: 5 Mar, 13:45</span>
<span class="t" id="t44" style="top:471.00px;font-size:8.7px;color:#333;letter-spacing:0.104px;right:46.03px;transform:scaleX(1.1400);transform-origin:100% 50%;z-index:0;">Depot Allied places</span>
<span class="t" id="t45" style="top:484.00px;font-size:7.1px;color:#666;right:46.18px;transform:scaleX(1.1075);transform-origin:100% 50%;z-index:0;">Booked: 5 Mar, 13:45</span>
<span class="t" id="t46" style="top:94.50px;font-size:9.4px;color:#111;font-weight:700;left:129.90px;transform:scaleX(1.0496);transform-origin:0 50%;z-index:2;">Tanjong Pagar teminal,</span>
<span class="t" id="t47" style="top:106.50px;font-size:9.4px;color:#111;font-weight:700;letter-spacing:-0.035px;left:129.76px;z-index:2;">Singapore Yard_01</span>
<span class="t" id="t48" style="top:128.00px;font-size:8.7px;color:#3a3a3a;left:147.02px;transform:scaleX(1.0957);transform-origin:0 50%;z-index:2;">2 Bedok Place road, S298123</span>
<span class="t" id="t49" style="top:146.00px;font-size:8.7px;color:#555;letter-spacing:0.143px;left:147.05px;transform:scaleX(1.1400);transform-origin:0 50%;z-index:2;"><span style="color:#2fc878">Open</span> till 5:30pm</span>
<span class="t" id="t50" style="top:164.00px;font-size:9.3px;color:#5e5e5e;letter-spacing:-0.314px;left:147.08px;z-index:2;">9871 2312</span>
<span class="t" id="t51" style="top:297.00px;font-size:8.7px;color:#777;letter-spacing:0.139px;left:129.61px;transform:scaleX(1.1400);transform-origin:0 50%;z-index:2;">En route</span>
<span class="t" id="t52" style="top:298.50px;font-size:8.1px;color:#f58a58;left:254.47px;transform:scaleX(1.0548);transform-origin:0 50%;z-index:2;">2/ 4</span>
<span class="t" id="t53" style="top:316.00px;font-size:8.7px;color:#2a2a2a;letter-spacing:0.057px;left:148.00px;transform:scaleX(1.1400);transform-origin:0 50%;z-index:2;">Arrived</span>
<span class="t" id="t54" style="top:328.50px;font-size:7.4px;color:#9a9a9a;left:147.41px;transform:scaleX(1.0583);transform-origin:0 50%;z-index:2;">12:30pm Aug 20, 2019</span>
<span class="t" id="t55" style="top:346.00px;font-size:8.7px;color:#2a2a2a;left:147.21px;transform:scaleX(1.1339);transform-origin:0 50%;z-index:2;">Mount THRU 999999 2</span>
<span class="t" id="t56" style="top:358.50px;font-size:7.4px;color:#9a9a9a;left:147.41px;transform:scaleX(1.0583);transform-origin:0 50%;z-index:2;">12:30pm Aug 20, 2019</span>
<span class="t" id="t57" style="top:375.00px;font-size:8.7px;color:#2a2a2a;letter-spacing:0.301px;left:147.11px;transform:scaleX(1.1400);transform-origin:0 50%;z-index:2;">Inspection</span>
<span class="t" id="t58" style="top:387.50px;font-size:7.4px;color:#9a9a9a;left:147.41px;transform:scaleX(1.0583);transform-origin:0 50%;z-index:2;">12:30pm Aug 20, 2019</span>
<span class="t" id="t59" style="top:405.00px;font-size:8.7px;color:#2a2a2a;letter-spacing:0.290px;left:147.21px;transform:scaleX(1.1400);transform-origin:0 50%;z-index:2;">Depart</span>
<span class="t" id="t60" style="top:417.50px;font-size:7.4px;color:#9a9a9a;left:147.41px;transform:scaleX(1.0583);transform-origin:0 50%;z-index:2;">12:30pm Aug 20, 2019</span>
<span class="t" id="t61" style="top:95.00px;font-size:8.9px;color:#111;font-weight:700;left:309.10px;transform:scaleX(1.1369);transform-origin:0 50%;z-index:2;">Appointment</span>
<span class="t" id="t62" style="top:113.50px;font-size:7.4px;color:#a6a6a6;letter-spacing:0.171px;left:309.30px;transform:scaleX(1.1400);transform-origin:0 50%;z-index:2;">Appointment date</span>
<span class="t" id="t63" style="top:128.00px;font-size:8.7px;color:#222;left:308.82px;transform:scaleX(1.1029);transform-origin:0 50%;z-index:2;">23/02/2020 12:30pm - 23/02/2020 12:30pm</span>
<span class="t" id="t64" style="top:161.00px;font-size:8.9px;color:#111;font-weight:700;left:308.65px;transform:scaleX(1.1180);transform-origin:0 50%;z-index:2;">Reference numbers</span>
<span class="t" id="t65" style="top:179.50px;font-size:7.4px;color:#a6a6a6;left:309.30px;transform:scaleX(1.0620);transform-origin:0 50%;z-index:2;">Vessel #</span>
<span class="t" id="t66" style="top:193.00px;font-size:8.7px;color:#222;letter-spacing:0.015px;left:309.30px;transform:scaleX(1.1400);transform-origin:0 50%;z-index:2;">Vessel num</span>
<span class="t" id="t67" style="top:179.50px;font-size:7.4px;color:#a6a6a6;letter-spacing:0.246px;left:475.63px;transform:scaleX(1.1400);transform-origin:0 50%;z-index:2;">Berth #</span>
<span class="t" id="t68" style="top:193.00px;font-size:8.7px;color:#222;letter-spacing:0.533px;left:475.70px;transform:scaleX(1.1400);transform-origin:0 50%;z-index:2;">berth num</span>
<span class="t" id="t69" style="top:220.50px;font-size:7.4px;color:#a6a6a6;left:309.30px;transform:scaleX(1.0891);transform-origin:0 50%;z-index:2;">Voyage #</span>
<span class="t" id="t70" style="top:235.00px;font-size:8.7px;color:#222;letter-spacing:0.145px;left:309.30px;transform:scaleX(1.1400);transform-origin:0 50%;z-index:2;">Voyage num</span>
<span class="t" id="t71" style="top:220.50px;font-size:7.4px;color:#a6a6a6;letter-spacing:0.251px;left:475.63px;transform:scaleX(1.1400);transform-origin:0 50%;z-index:2;">Berth time</span>
<span class="t" id="t72" style="top:235.00px;font-size:8.7px;color:#222;left:475.82px;transform:scaleX(1.1125);transform-origin:0 50%;z-index:2;">23/02/2020 12:30pm</span>
<span class="t" id="t73" style="top:262.50px;font-size:7.4px;color:#a6a6a6;letter-spacing:0.118px;left:308.63px;transform:scaleX(1.1400);transform-origin:0 50%;z-index:2;">Port of loading</span>
<span class="t" id="t74" style="top:277.00px;font-size:8.7px;color:#222;left:309.30px;transform:scaleX(1.1363);transform-origin:0 50%;z-index:2;">Australia</span>
<span class="t" id="t75" style="top:262.50px;font-size:7.4px;color:#a6a6a6;letter-spacing:0.026px;left:475.63px;transform:scaleX(1.1400);transform-origin:0 50%;z-index:2;">Bill of Lading #</span>
<span class="t" id="t76" style="top:277.00px;font-size:8.7px;color:#222;letter-spacing:0.204px;left:475.51px;transform:scaleX(1.1400);transform-origin:0 50%;z-index:2;">Bill of lading</span>
<span class="t" id="t77" style="top:310.00px;font-size:8.9px;color:#111;font-weight:700;left:308.65px;transform:scaleX(1.1164);transform-origin:0 50%;z-index:2;">Notes</span>
<span class="t" id="t78" style="top:327.50px;font-size:7.4px;color:#a6a6a6;letter-spacing:0.032px;left:308.63px;transform:scaleX(1.1400);transform-origin:0 50%;z-index:2;">Remarks</span>
<span class="t" id="t79" style="top:346.00px;font-size:8.7px;color:#222;letter-spacing:0.123px;left:308.51px;transform:scaleX(1.1400);transform-origin:0 50%;z-index:2;">Lorem ipsum dolor sit amet, consectetur adipiscing elit, sed do eiusm</span>
<span class="t" id="t80" style="top:357.00px;font-size:8.7px;color:#222;letter-spacing:0.141px;left:308.51px;transform:scaleX(1.1400);transform-origin:0 50%;z-index:2;">Lorem ipsum dolor sit amet, consectetur</span>
<span class="t" id="t81" style="top:387.00px;font-size:8.9px;color:#111;font-weight:700;left:308.66px;transform:scaleX(1.1030);transform-origin:0 50%;z-index:2;">Events</span>
<span class="t" id="t82" style="top:405.50px;font-size:7.4px;color:#a6a6a6;letter-spacing:0.084px;left:308.63px;transform:scaleX(1.1400);transform-origin:0 50%;z-index:2;">Location action</span>
<span class="t" id="t83" style="top:419.00px;font-size:8.7px;color:#222;letter-spacing:0.164px;left:308.51px;transform:scaleX(1.1400);transform-origin:0 50%;z-index:2;">Pick up at port</span>
</body></html>
